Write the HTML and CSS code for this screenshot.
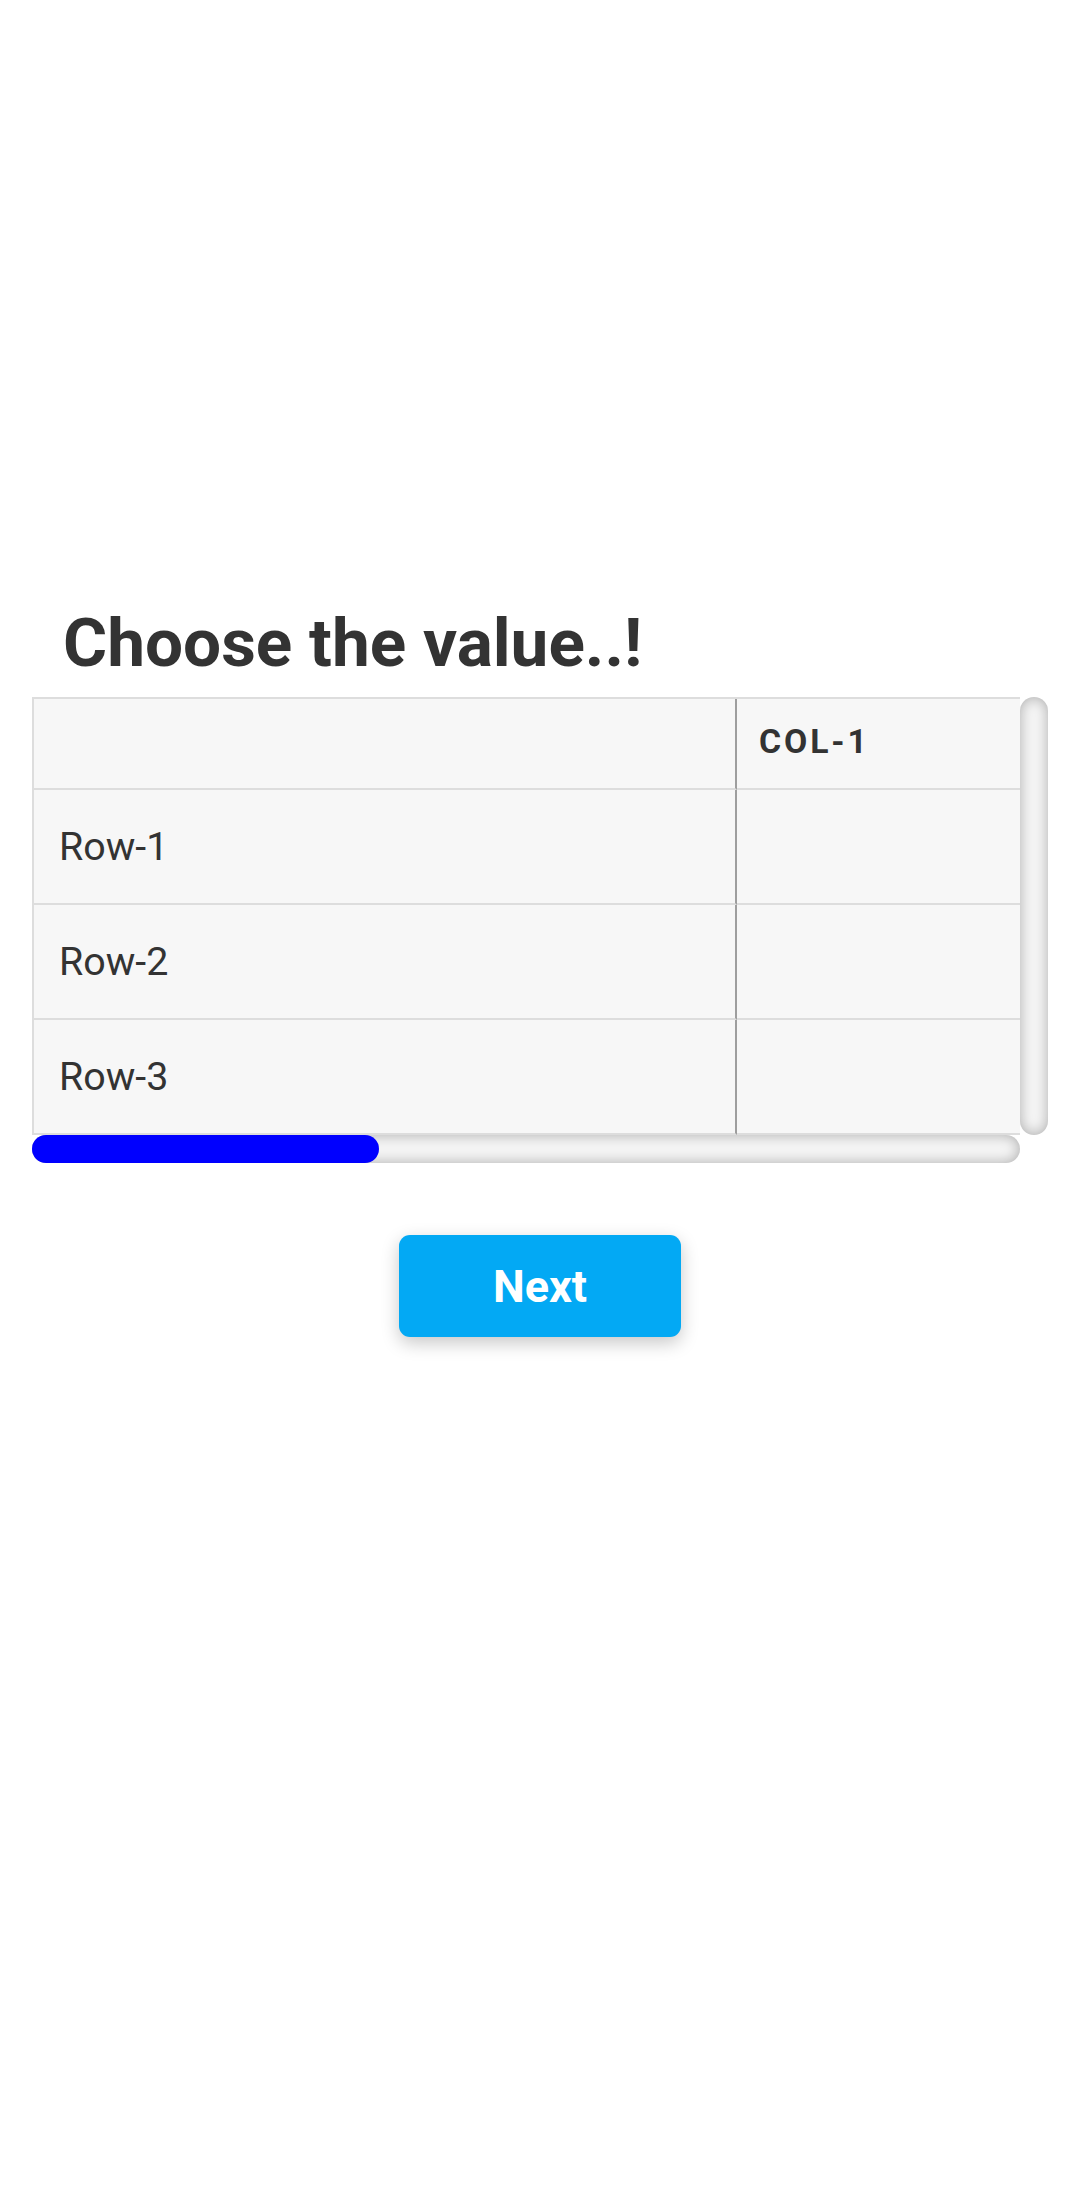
FILE: index.html
```html
<!DOCTYPE html>
<html lang="en">
<head>
<meta charset="utf-8">
<title>Choose the value</title>
<link rel="stylesheet" href="styles.css">
</head>
<body>
<main class="page">
  <h1 class="title">Choose the value..!</h1>
  <div class="scroller">
    <div class="grid">
      <div class="row head">
        <div class="cell first"></div>
        <div class="cell col">COL-1</div>
      </div>
      <div class="row">
        <div class="cell first label">Row-1</div>
        <div class="cell"></div>
      </div>
      <div class="row">
        <div class="cell first label">Row-2</div>
        <div class="cell"></div>
      </div>
      <div class="row">
        <div class="cell first label">Row-3</div>
        <div class="cell"></div>
      </div>
    </div>
    <div class="vbar"></div>
    <div class="hbar"><div class="thumb"></div></div>
    <div class="corner"></div>
  </div>
  <div class="actions">
    <button class="next" type="button">Next</button>
  </div>
</main>
</body>
</html>
```
FILE: styles.css
```css
html, body {
  margin: 0;
  padding: 0;
  background: #ffffff;
}
body {
  font-family: Roboto, "Noto Sans", "Liberation Sans", sans-serif;
  color: #333333;
  width: 1080px;
  height: 2208px;
}
.page {
  padding: 603px 32px 0 32px;
}
.title {
  margin: 0 0 14px 31px;
  font-size: 67.5px;
  line-height: 80px;
  font-weight: 700;
  color: #333333;
}
.scroller {
  display: grid;
  grid-template-columns: 988px 28px;
  grid-template-rows: 438px 28px;
  width: 1016px;
}
.grid {
  overflow: hidden;
  background: #f7f7f7;
  border-top: 2px solid #dddddd;
  border-left: 2px solid #dddddd;
  box-sizing: border-box;
}
.row {
  display: grid;
  grid-template-columns: 703px 700px;
  height: 115px;
  box-sizing: border-box;
}
.row.head {
  height: 91px;
}
.cell {
  box-sizing: border-box;
  border-bottom: 2px solid #dddddd;
  display: flex;
  align-items: center;
  padding: 0 22px 0 25px;
}
.cell.first {
  border-right: 2px solid #9e9e9e;
}
.label {
  font-size: 39.4px;
  font-weight: 400;
  color: #333333;
}
.col {
  font-size: 33.75px;
  font-weight: 700;
  letter-spacing: 2.9px;
  color: #333333;
  padding-left: 22px;
  padding-bottom: 4px;
}
.vbar, .hbar {
  background: #f5f5f5;
  border-radius: 14px;
  box-shadow: inset 0 0 14px rgba(0, 0, 0, 0.3);
}
.hbar {
  display: flex;
}
.thumb {
  width: 347px;
  height: 28px;
  background: #0000ff;
  border-radius: 14px;
}
.actions {
  display: flex;
  justify-content: center;
  margin: 72px -32px 0 -32px;
}
.next {
  width: 282px;
  height: 102px;
  border: none;
  border-radius: 11px;
  background: #03a9f4;
  color: #ffffff;
  font-family: Roboto, "Noto Sans", sans-serif;
  font-size: 45px;
  font-weight: 700;
  box-shadow: 0 6px 18px rgba(0, 0, 0, 0.22);
  padding: 0;
}
```
